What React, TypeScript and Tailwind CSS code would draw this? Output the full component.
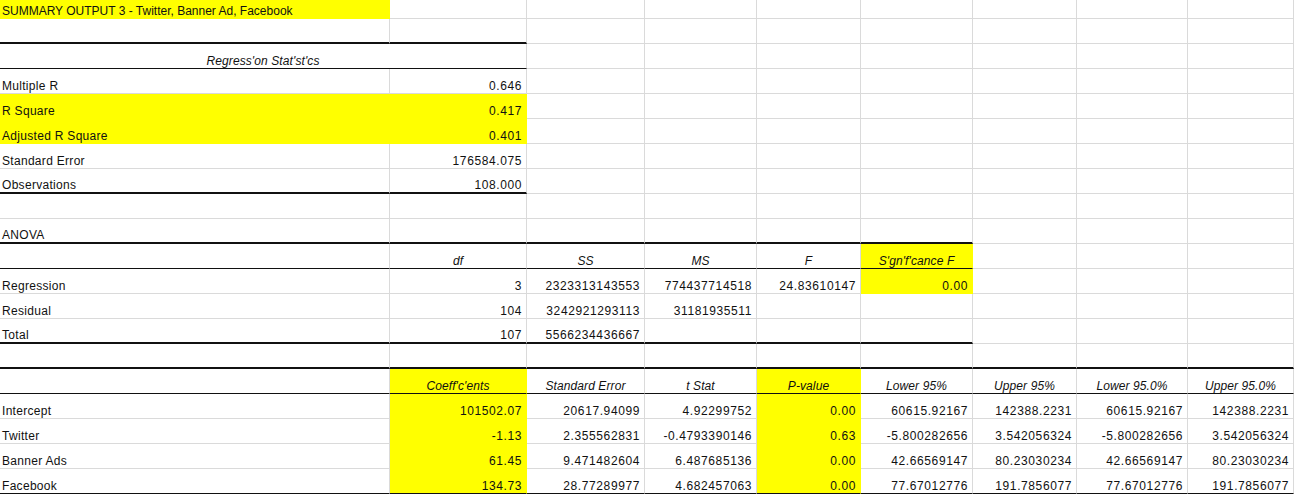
type Cell = {
  t?: string;
  yellow?: boolean;
  italic?: boolean;
  align?: 'l' | 'r' | 'c';
  span?: number;
};

const cols = 9;

// bottom border of each row: [kind, how many columns from the left]
const bottoms: Record<number, ['thick' | 'thin', number]> = {
  1: ['thick', 2],
  2: ['thin', 2],
  7: ['thick', 2],
  9: ['thick', 6],
  10: ['thin', 6],
  13: ['thick', 6],
  14: ['thick', 9],
  15: ['thin', 9],
  19: ['thin', 9],
};

const L = (t: string, yellow = false): Cell => ({ t, align: 'l', yellow });
const R = (t: string, yellow = false): Cell => ({ t, align: 'r', yellow });
const H = (t: string, yellow = false): Cell => ({ t, align: 'c', italic: true, yellow });

const rows: Cell[][] = [
  [{ t: 'SUMMARY OUTPUT 3 - Twitter, Banner Ad, Facebook', align: 'l', yellow: true }],
  [],
  [{ t: "Regress'on Stat'st'cs", align: 'c', italic: true, span: 2 }],
  [L('Multiple R'), R('0.646')],
  [L('R Square', true), R('0.417', true)],
  [L('Adjusted R Square', true), R('0.401', true)],
  [L('Standard Error'), R('176584.075')],
  [L('Observations'), R('108.000')],
  [],
  [L('ANOVA')],
  [{}, H('df'), H('SS'), H('MS'), H('F'), H("S'gn'f'cance F", true)],
  [L('Regression'), R('3'), R('2323313143553'), R('774437714518'), R('24.83610147'), R('0.00', true)],
  [L('Residual'), R('104'), R('3242921293113'), R('31181935511')],
  [L('Total'), R('107'), R('5566234436667')],
  [],
  [
    {},
    H("Coeff'c'ents", true),
    H('Standard Error'),
    H('t Stat'),
    H('P-value', true),
    H('Lower 95%'),
    H('Upper 95%'),
    H('Lower 95.0%'),
    H('Upper 95.0%'),
  ],
  [L('Intercept'), R('101502.07', true), R('20617.94099'), R('4.92299752'), R('0.00', true), R('60615.92167'), R('142388.2231'), R('60615.92167'), R('142388.2231')],
  [L('Twitter'), R('-1.13', true), R('2.355562831'), R('-0.4793390146'), R('0.63', true), R('-5.800282656'), R('3.542056324'), R('-5.800282656'), R('3.542056324')],
  [L('Banner Ads'), R('61.45', true), R('9.471482604'), R('6.487685136'), R('0.00', true), R('42.66569147'), R('80.23030234'), R('42.66569147'), R('80.23030234')],
  [L('Facebook'), R('134.73', true), R('28.77289977'), R('4.682457063'), R('0.00', true), R('77.67012776'), R('191.7856077'), R('77.67012776'), R('191.7856077')],
];

const SheetCell = ({ cell, row, col }: { cell: Cell; row: number; col: number }) => {
  const b = bottoms[row];
  const edge = b && col < b[1] ? b[0] : null;

  let bottom = cell.yellow ? 'border-b border-b-[#ffff00]' : 'border-b border-b-[#dadada]';
  if (edge === 'thin') bottom = 'border-b border-b-[#111]';
  if (edge === 'thick') bottom = 'border-b-2 border-b-[#111]';

  const right = cell.yellow ? 'border-r-[#ffff00]' : 'border-r-[#dadada]';
  const align =
    cell.align === 'r'
      ? 'justify-end pr-[4px] tracking-[0.6px]'
      : cell.align === 'c'
        ? 'justify-center tracking-[0.1px]'
        : row === 0
          ? 'justify-start pl-[2px] tracking-normal'
          : 'justify-start pl-[2px] tracking-[0.3px]';

  return (
    <div
      className={`flex items-end overflow-visible whitespace-nowrap border-r leading-[14px] ${right} ${bottom} ${align} ${
        cell.yellow ? 'bg-[#ffff00]' : 'bg-white'
      } ${cell.italic ? 'italic' : ''} ${cell.span === 2 ? 'col-span-2' : ''}`}
    >
      {cell.t}
    </div>
  );
};

export default function App() {
  return (
    <div className="h-[494px] w-[1294px] overflow-hidden bg-white text-[12px] text-[#111] [font-family:'Liberation_Sans',Arial,sans-serif]">
      <div className="grid grid-cols-[390px_137px_118px_112px_104px_112px_104px_111px_106px] grid-rows-[19px_repeat(19,25px)]">
        {rows.map((r, ri) => {
          const cells: JSX.Element[] = [];
          let col = 0;
          let k = 0;
          while (col < cols) {
            const cell = r[k] ?? {};
            cells.push(<SheetCell key={`${ri}-${col}`} cell={cell} row={ri} col={col} />);
            col += cell.span ?? 1;
            k++;
          }
          return cells;
        })}
      </div>
    </div>
  );
}
